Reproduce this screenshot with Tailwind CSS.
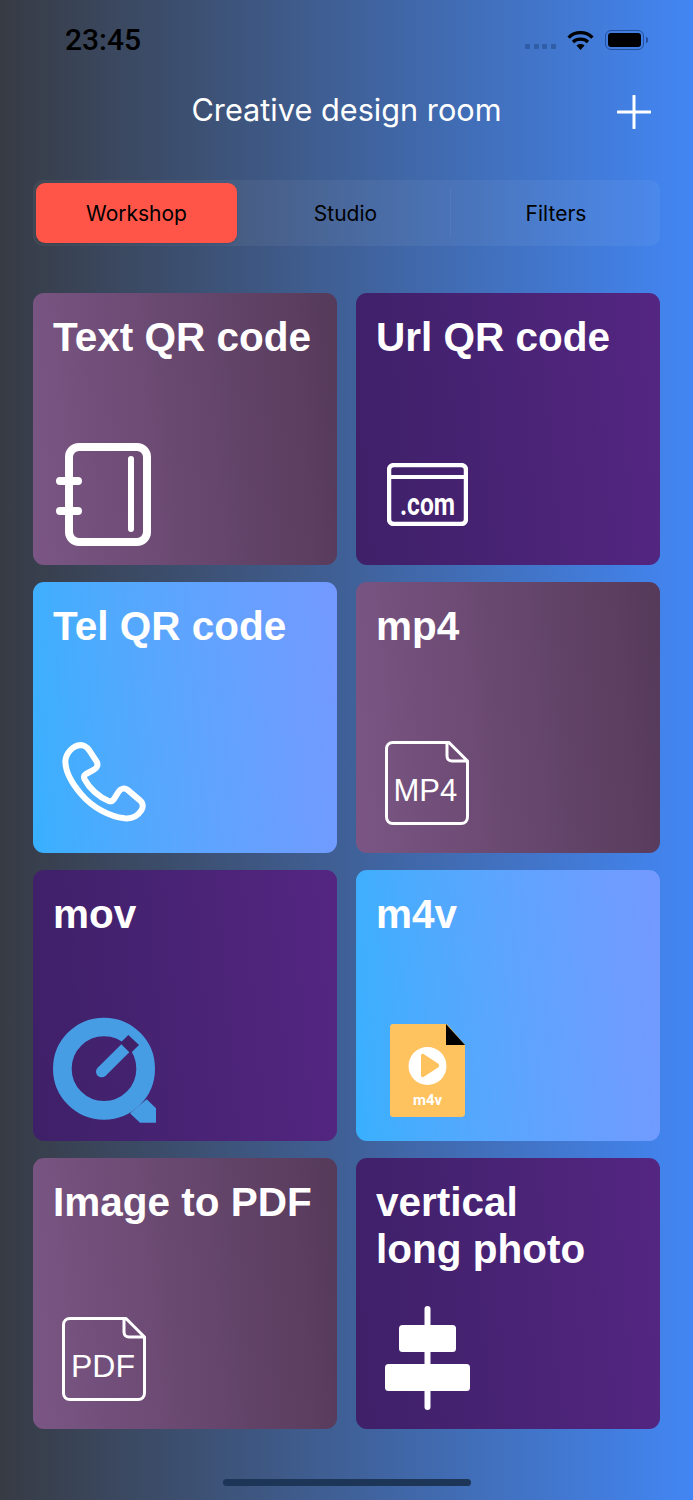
<!DOCTYPE html>
<html lang="en">
<head>
  <meta charset="utf-8"/>
  <meta content="width=device-width, initial-scale=1" name="viewport"/>
  <title>Creative design room</title>
  <script src="https://cdn.jsdelivr.net/npm/@tailwindcss/browser@4"></script>
</head>
<body class="font-['Inter',sans-serif]">
  <div class="relative flex h-[1500px] w-[693px] flex-col overflow-hidden bg-linear-to-r from-[#373b44] to-[#4286f4] px-[33px]">

    <!-- Status bar -->
    <div class="flex h-[80px] items-center justify-between pl-[32px] pr-[12px]">
      <span class="font-['Roboto',sans-serif] text-[30px] font-medium leading-none text-black">23:45</span>
      <div class="flex items-center">
        <div class="mt-[13px] mr-[11px] flex gap-[3.6px]">
          <span class="size-[5px] rounded-[1px] bg-[#2f5da6]"></span>
          <span class="size-[5px] rounded-[1px] bg-[#2f5da6]"></span>
          <span class="size-[5px] rounded-[1px] bg-[#2f5da6]"></span>
          <span class="size-[5px] rounded-[1px] bg-[#2f5da6]"></span>
        </div>
        <svg width="27" height="20" viewBox="0 0 27 20" class="mr-[11px]">
          <path d="M1.6 7.6C8 1 19 1 25.4 7.6" fill="none" stroke="#000" stroke-width="3.4"/>
          <path d="M6 12C10 8.2 17 8.2 21 12" fill="none" stroke="#000" stroke-width="3.2"/>
          <path d="M9.5 15.4C12 13.6 15 13.6 17.5 15.4L13.5 20Z" fill="#000"/>
        </svg>
        <div class="flex items-center">
          <div class="h-[20px] w-[39px] rounded-[6px] border-[1.5px] border-[#234f9c] p-[2px]">
            <div class="h-full w-full rounded-[3px] bg-black"></div>
          </div>
          <div class="ml-[2px] h-[6px] w-[2px] rounded-r-[2px] bg-[#234f9c]"></div>
        </div>
      </div>
    </div>

    <!-- Title -->
    <div class="relative flex h-[60px] items-center justify-center">
      <h1 class="text-[30.7px] font-normal leading-none text-white">Creative design room</h1>
      <svg width="34" height="34" viewBox="0 0 34 34" class="absolute right-[9px] top-[15px]">
        <path d="M17 1V33M1 17H33" stroke="#fff" stroke-width="3" stroke-linecap="round"/>
      </svg>
    </div>

    <!-- Segmented control -->
    <div class="mt-[40px] flex h-[66px] items-center rounded-[10px] bg-white/5 px-[3px] text-[21px] text-black">
      <div class="flex h-[60px] w-[201px] items-center justify-center rounded-[9px] bg-[#ff5549] pt-px shadow-sm">Workshop</div>
      <div class="flex h-[60px] w-[213px] items-center justify-center pl-[4px] pt-px">Studio</div>
      <div class="flex h-[50px] flex-1 items-center justify-center border-l border-white/5 pl-[4px] pt-px">Filters</div>
    </div>

    <!-- Cards -->
    <div class="mt-[47px] grid grid-cols-[304px_304px] gap-x-[19px] gap-y-[17px] font-['Liberation_Sans',sans-serif] text-[40.5px] font-bold leading-[47px] text-white">

      <div class="flex h-[272px] flex-col rounded-[11px] bg-linear-85 from-[#7b5685] to-[#563a5a] pl-[20px] pt-[21px]">
        <p>Text QR code</p>
        <svg width="104" height="112" viewBox="0 0 104 112" class="mt-auto mb-[15px] -ml-[1px]">
          <rect x="17" y="9" width="78" height="95" rx="10" fill="none" stroke="#fff" stroke-width="8"/>
          <path d="M79 21V91" stroke="#fff" stroke-width="6" stroke-linecap="round"/>
          <path d="M8 43H26M8 73H26" stroke="#fff" stroke-width="8" stroke-linecap="round"/>
        </svg>
      </div>

      <div class="flex h-[272px] flex-col rounded-[11px] bg-linear-85 from-[#3e2068] to-[#542682] pl-[20px] pt-[21px]">
        <p>Url QR code</p>
        <svg width="81" height="63" viewBox="0 0 81 63" class="mt-auto mb-[39px] ml-[11px]">
          <rect x="2" y="2" width="77" height="59" rx="5" fill="none" stroke="#fff" stroke-width="4.5"/>
          <path d="M2 14H79" stroke="#fff" stroke-width="4"/>
          <text x="13" y="52" font-family="Roboto, sans-serif" font-weight="700" font-size="31" textLength="55" lengthAdjust="spacingAndGlyphs" fill="#fff">.com</text>
        </svg>
      </div>

      <div class="flex h-[271px] flex-col rounded-[11px] bg-linear-85 from-[#38b0fd] to-[#7399ff] pl-[20px] pt-[21px]">
        <p>Tel QR code</p>
        <svg width="110" height="100" viewBox="0 0 330 300" class="mt-auto mb-[22px] -ml-[3px]">
          <path d="M46 90C48 66 68 44 92 42C102 42 112 50 118 58L140 92C146 102 140 112 132 116L108 129C102 133 100 137 104 145C118 172 146 198 176 210C184 213 188 210 192 204L206 182C212 172 224 170 232 176L270 208C280 216 280 230 274 238C262 256 244 264 224 262C178 256 128 230 94 190C68 160 46 124 46 90Z" fill="none" stroke="#fff" stroke-width="18" stroke-linejoin="round"/>
        </svg>
      </div>

      <div class="flex h-[271px] flex-col rounded-[11px] bg-linear-85 from-[#7b5685] to-[#563a5a] pl-[20px] pt-[21px]">
        <p>mp4</p>
        <svg width="84" height="84" viewBox="0 0 84 84" class="mt-auto mb-[28px] ml-[9px]">
          <path d="M64 1.5H8C4 1.5 1.5 4 1.5 8V76C1.5 80 4 82.5 8 82.5H76C80 82.5 82.5 80 82.5 76V20ZM62 1.5V15C62 18 64 20 67 20H82.5" fill="none" stroke="#fff" stroke-width="3" stroke-linejoin="round"/>
          <text x="8.5" y="60" font-family="Liberation Sans, sans-serif" font-size="31" font-weight="400" fill="#fff">MP4</text>
        </svg>
      </div>

      <div class="flex h-[271px] flex-col rounded-[11px] bg-linear-85 from-[#3e2068] to-[#542682] pl-[20px] pt-[21px]">
        <p>mov</p>
        <svg width="130" height="120" viewBox="0 0 390 360" class="mt-auto mb-[11px] -ml-[13px]">
          <circle cx="192" cy="176" r="125" fill="none" stroke="#479de3" stroke-width="56"/>
          <path d="M320 268L348 295V338H300L270 310Z" fill="#479de3"/>
          <path d="M240 100L265 75L297 105L272 130Z" fill="#3f2069"/>
          <path d="M185 185L256 115" stroke="#479de3" stroke-width="34"/>
          <circle cx="185" cy="185" r="17" fill="#479de3"/>
        </svg>
      </div>

      <div class="flex h-[271px] flex-col rounded-[11px] bg-linear-85 from-[#38b0fd] to-[#7399ff] pl-[20px] pt-[21px]">
        <p>m4v</p>
        <svg width="75" height="93" viewBox="0 0 75 93" class="mt-auto mb-[24px] ml-[14px]">
          <path d="M3 0H57L75 21V90C75 92 73 93 72 93H3C1 93 0 92 0 90V3C0 1 1 0 3 0Z" fill="#fec25f"/>
          <path d="M56 0L75 21H56Z" fill="#000"/>
          <circle cx="37.5" cy="42" r="19" fill="#fff"/>
          <path d="M31 31.5C31 30 32.5 29.5 33.5 30L48 39.5C49.5 40.5 49.5 42.5 48 43.5L33.5 53C32.5 53.5 31 53 31 51.5Z" fill="#fec25f"/>
          <text x="37.5" y="81" text-anchor="middle" font-family="Roboto, sans-serif" font-size="15" font-weight="700" fill="#fff">m4v</text>
        </svg>
      </div>

      <div class="flex h-[271px] flex-col rounded-[11px] bg-linear-85 from-[#7b5685] to-[#563a5a] pl-[20px] pt-[21px]">
        <p>Image to PDF</p>
        <svg width="84" height="84" viewBox="0 0 84 84" class="mt-auto mb-[28px] ml-[9px]">
          <path d="M64 1.5H8C4 1.5 1.5 4 1.5 8V76C1.5 80 4 82.5 8 82.5H76C80 82.5 82.5 80 82.5 76V20ZM62 1.5V15C62 18 64 20 67 20H82.5" fill="none" stroke="#fff" stroke-width="3" stroke-linejoin="round"/>
          <text x="9" y="60" font-family="Liberation Sans, sans-serif" font-size="32" font-weight="400" fill="#fff">PDF</text>
        </svg>
      </div>

      <div class="flex h-[271px] flex-col rounded-[11px] bg-linear-85 from-[#3e2068] to-[#542682] pl-[20px] pt-[21px]">
        <p>vertical<br/>long photo</p>
        <svg width="85" height="104" viewBox="0 0 85 104" class="mt-auto mb-[19px] ml-[9px]">
          <path d="M42.5 3V101" stroke="#fff" stroke-width="6" stroke-linecap="round"/>
          <rect x="14" y="19" width="57" height="27" rx="3.5" fill="#fff"/>
          <rect x="0" y="58" width="85" height="27" rx="3.5" fill="#fff"/>
        </svg>
      </div>
    </div>

    <!-- Home indicator -->
    <div class="absolute bottom-[14px] left-[223px] h-[7px] w-[248px] rounded-full bg-[#1d3557]"></div>
  </div>
</body>
</html>
